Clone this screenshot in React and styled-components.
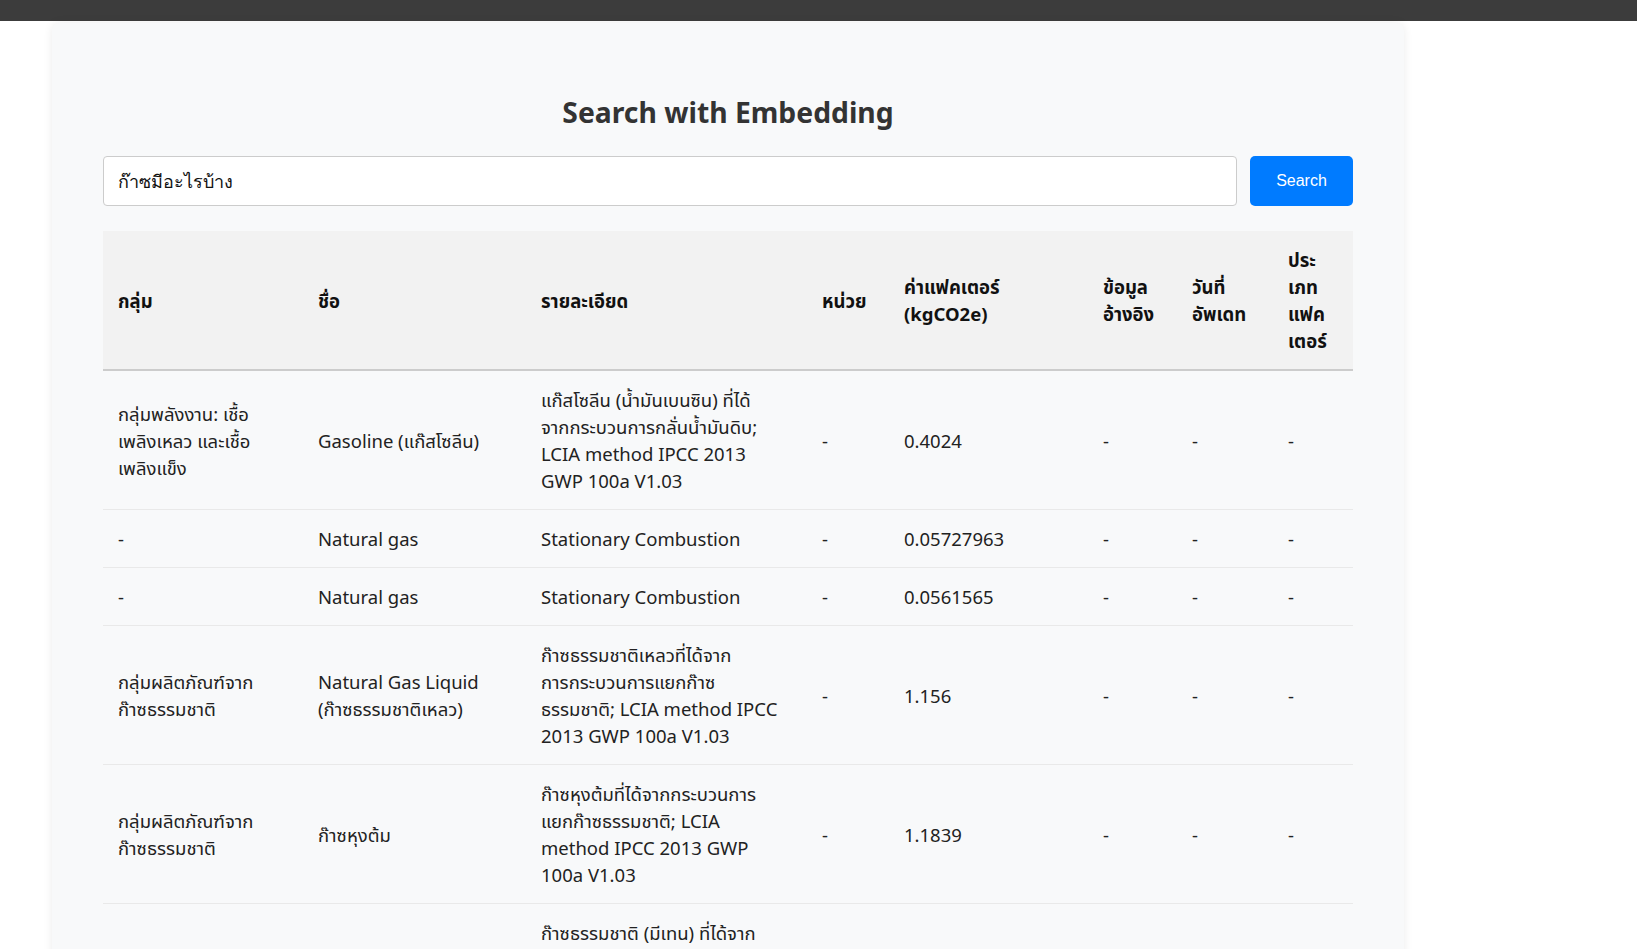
import React from 'react';
import styled, { createGlobalStyle } from 'styled-components';

const GlobalStyle = createGlobalStyle`
  html, body {
    margin: 0;
    padding: 0;
    background: #ffffff;
  }
  body {
    font-family: "Noto Sans", "Noto Sans Thai", "Liberation Sans", sans-serif;
    color: #222;
  }
`;

const TopBar = styled.div`
  height: 21px;
  background: #3c3c3c;
`;

const Card = styled.main`
  width: 1250px;
  margin: 2px 0 0 52px;
  padding: 64px 51px 0;
  background: #f8f9fa;
  border-radius: 8px 8px 0 0;
  box-shadow: 0 0 10px rgba(0, 0, 0, 0.08);
`;

const Title = styled.h1`
  margin: 0 0 19px;
  text-align: center;
  font-size: 28.3px;
  line-height: 50px;
  font-weight: 700;
  color: #333;
`;

const SearchRow = styled.form`
  display: flex;
  gap: 13px;
  margin-bottom: 25px;
`;

const SearchInput = styled.input`
  flex: 1;
  height: 50px;
  box-sizing: border-box;
  padding: 0 14px;
  border: 1px solid #ccc;
  border-radius: 4px;
  background: #fff;
  font-family: "Liberation Sans", sans-serif;
  font-size: 18px;
  color: #111;
  outline: none;
`;

const SearchButton = styled.button`
  width: 103px;
  height: 50px;
  border: none;
  border-radius: 5px;
  background: #007bff;
  color: #fff;
  font-family: "Liberation Sans", sans-serif;
  font-size: 16px;
  cursor: pointer;
`;

const Table = styled.table`
  width: 1250px;
  border-collapse: collapse;
  table-layout: fixed;
  font-size: 18.5px;
  line-height: 27px;
`;

const HeadCell = styled.th`
  box-sizing: border-box;
  width: ${p => p.$w}px;
  padding: 15px 15px;
  text-align: left;
  vertical-align: middle;
  font-weight: 700;
  background: #f2f2f2;
  border-bottom: 2px solid #ccc;
  color: #111;
`;

const Row = styled.tr`
  border-bottom: 1px solid #e9e9e9;
`;

const Cell = styled.td`
  padding: 15px 15px;
  vertical-align: middle;
  color: #222;
`;

const Line = styled.span`
  display: block;
`;

const columns = [
  { key: 'group', label: 'กลุ่ม', w: 200 },
  { key: 'name', label: 'ชื่อ', w: 223 },
  { key: 'detail', label: 'รายละเอียด', w: 281 },
  { key: 'unit', label: 'หน่วย', w: 82 },
  { key: 'factor', label: 'ค่าแฟคเตอร์ (kgCO2e)', w: 199 },
  { key: 'ref', label: 'ข้อมูลอ้างอิง', w: 89 },
  { key: 'updated', label: 'วันที่อัพเดท', w: 96 },
  { key: 'type', label: 'ประเภทแฟคเตอร์', w: 80 },
];

const natGasGroup = ['กลุ่มผลิตภัณฑ์จาก', 'ก๊าซธรรมชาติ'];

const rows = [
  {
    group: ['กลุ่มพลังงาน: เชื้อ', 'เพลิงเหลว และเชื้อ', 'เพลิงแข็ง'],
    name: 'Gasoline (แก๊สโซลีน)',
    detail: ['แก๊สโซลีน (น้ำมันเบนซิน) ที่ได้', 'จากกระบวนการกลั่นน้ำมันดิบ;', 'LCIA method IPCC 2013', 'GWP 100a V1.03'],
    factor: '0.4024',
  },
  { group: '-', name: 'Natural gas', detail: 'Stationary Combustion', factor: '0.05727963' },
  { group: '-', name: 'Natural gas', detail: 'Stationary Combustion', factor: '0.0561565' },
  {
    group: natGasGroup,
    name: ['Natural Gas Liquid', '(ก๊าซธรรมชาติเหลว)'],
    detail: ['ก๊าซธรรมชาติเหลวที่ได้จาก', 'การกระบวนการแยกก๊าซ', 'ธรรมชาติ; LCIA method IPCC', '2013 GWP 100a V1.03'],
    factor: '1.156',
  },
  {
    group: natGasGroup,
    name: 'ก๊าซหุงต้ม',
    detail: ['ก๊าซหุงต้มที่ได้จากกระบวนการ', 'แยกก๊าซธรรมชาติ; LCIA', 'method IPCC 2013 GWP', '100a V1.03'],
    factor: '1.1839',
  },
  {
    group: natGasGroup,
    name: ['Natural Gas', '(ก๊าซธรรมชาติ)'],
    detail: ['ก๊าซธรรมชาติ (มีเทน) ที่ได้จาก', 'กระบวนการแยกก๊าซธรรมชาติ;', 'LCIA method IPCC 2013', 'GWP 100a V1.03'],
    factor: '0.2166',
  },
];

const renderValue = value => {
  if (!value) return '-';
  if (Array.isArray(value)) return value.map((l, i) => <Line key={i}>{l}</Line>);
  return value;
};

const App = () => {
  return (
    <>
      <GlobalStyle />
      <TopBar />
      <Card>
        <Title>Search with Embedding</Title>
        <SearchRow onSubmit={e => e.preventDefault()}>
          <SearchInput defaultValue="ก๊าซมีอะไรบ้าง" />
          <SearchButton type="submit">Search</SearchButton>
        </SearchRow>
        <Table>
          <thead>
            <tr>
              {columns.map(c => (
                <HeadCell key={c.key} $w={c.w}>{c.label}</HeadCell>
              ))}
            </tr>
          </thead>
          <tbody>
            {rows.map((r, i) => (
              <Row key={i}>
                {columns.map(c => (
                  <Cell key={c.key}>{renderValue(r[c.key])}</Cell>
                ))}
              </Row>
            ))}
          </tbody>
        </Table>
      </Card>
    </>
  );
};

export default App;
